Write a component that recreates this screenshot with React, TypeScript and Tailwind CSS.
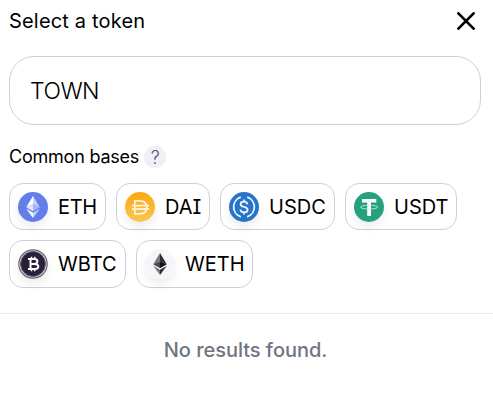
import type { ReactNode } from 'react';

function Eth({ dark = false }: { dark?: boolean }) {
  const c = dark
    ? ['#303030', '#777777', '#151515', '#484848', '#777777', '#303030']
    : ['#ffffff', '#c9d3fa', '#a9b7f6', '#dce3fc', '#ffffff', '#c4cffa'];
  return (
    <svg viewBox="0 0 30 30" className="size-full">
      <circle cx="15" cy="15" r="15" fill={dark ? '#f5f6fa' : '#627eea'} />
      <path d="M15 4 8.2 15.2 15 12.2Z" fill={dark ? c[1] : c[0]} />
      <path d="M15 4v8.2l6.8 3Z" fill={dark ? c[0] : c[1]} />
      <path d="M8.2 15.2 15 19.2v-7Z" fill={c[3]} />
      <path d="m21.8 15.2-6.8 4v-7Z" fill={c[2]} />
      <path d="M8.2 16.8 15 26v-5.3Z" fill={c[4]} />
      <path d="M21.8 16.8 15 26v-5.3Z" fill={c[5]} />
    </svg>
  );
}

function Dai() {
  return (
    <svg viewBox="0 0 30 30" className="size-full" fill="none">
      <defs>
        <linearGradient id="dai" x1="0" y1="0" x2="0" y2="1">
          <stop stopColor="#f9a80f" />
          <stop offset="1" stopColor="#fbc557" />
        </linearGradient>
      </defs>
      <circle cx="15" cy="15" r="15" fill="url(#dai)" />
      <path d="M9.8 8.8h4.7c4.5 0 7.3 2.5 7.3 6.5s-2.8 6.5-7.3 6.5H9.8ZM7 13.6h17M7 17h17" stroke="#fff4d8" strokeWidth="1.8" />
    </svg>
  );
}

function Usdc() {
  return (
    <svg viewBox="0 0 30 30" className="size-full" fill="none">
      <circle cx="15" cy="15" r="15" fill="#2775ca" />
      <g stroke="#eef6ff" strokeWidth="1.8">
        <path d="M11.8 5.2a10.3 10.3 0 0 0 0 19.6M18.2 5.2a10.3 10.3 0 0 1 0 19.6" />
        <path d="M18.4 12.4c-.2-1.8-1.4-2.7-3.4-2.7-2.1 0-3.4.9-3.4 2.5 0 3.8 7 1.7 7 5.5 0 1.7-1.4 2.6-3.6 2.6s-3.5-1-3.7-2.8M15 7.5v2.3M15 20.2v2.3" />
      </g>
    </svg>
  );
}

function Usdt() {
  return (
    <svg viewBox="0 0 30 30" className="size-full" fill="none">
      <circle cx="15" cy="15" r="15" fill="#26a17b" />
      <path d="M8 7h14.3v3.6h-5.3V24h-3.8V10.6H8Z" fill="#fff" />
      <ellipse cx="15.1" cy="15.2" rx="8.6" ry="1.9" stroke="#bfe8dc" strokeWidth=".9" />
    </svg>
  );
}

function Wbtc() {
  return (
    <svg viewBox="0 0 30 30" className="size-full" fill="none">
      <circle cx="15" cy="15" r="14.2" fill="#e4e1ea" stroke="#676172" strokeWidth="1.2" />
      <circle cx="15" cy="15" r="12.4" fill="#282138" stroke="#5b536a" strokeWidth="1" />
      <g stroke="#fff" strokeWidth="2">
        <path d="M10 10h6.1c4.4 0 4.4 4.9 0 4.9h-3.6m-2.5 5.2h6.7c4.8 0 4.8-5.2 0-5.2M12.5 10v10" />
        <path d="M13.5 7.7V10m3.2-2.3V10m-3.2 10v2.3m3.2-2.3v2.3" strokeWidth="1.5" />
      </g>
    </svg>
  );
}

function Token({ name, icon, size }: { name: string; icon: ReactNode; size: string }) {
  return (
    <button className={`flex items-center rounded-[14px] border border-[#d0cfdc] pl-2 ${size}`}>
      <span className="mr-2.5 size-[30px] shrink-0 rounded-full shadow-[0_6px_10px_rgba(0,0,0,0.07)]">{icon}</span>
      <span className="text-[20px] leading-6">{name}</span>
    </button>
  );
}

export default function App() {
  return (
    <main className="h-[407px] w-[493px] overflow-hidden bg-white font-['Inter',sans-serif] text-black">
      <header className="flex h-14 items-start justify-between pl-[9px] pr-[18px]">
        <h1 className="mt-[9px] text-[20px] leading-6 tracking-[0.18px]">Select a token</h1>
        <button aria-label="Close" className="mt-3">
          <svg viewBox="0 0 18 18" className="size-[18px]" fill="none" stroke="currentColor" strokeWidth="2.7" strokeLinecap="round">
            <path d="m1.4 1.4 15.2 15.2M16.6 1.4 1.4 16.6" />
          </svg>
        </button>
      </header>
      <input
        aria-label="Search token"
        defaultValue="TOWN"
        className="ml-[9px] block h-[69px] w-[472px] rounded-[25px] border border-[#d0cfdc] px-[20px] text-[23px] font-[350] tracking-[-0.5px] outline-none"
      />
      <section className="px-[9px] pt-5">
        <div className="flex h-6 items-center">
          <h2 className="text-[18px] leading-6 tracking-[-0.22px]">Common bases</h2>
          <span className="ml-[5px] flex size-[22px] items-center justify-center rounded-full bg-[#efeff6] text-[18px] font-light text-[#55556a]">?</span>
        </div>
        <div className="mt-[14px] flex gap-2.5">
          <Token name="ETH" icon={<Eth />} size="h-[47px] w-[97px] tracking-[-0.3px]" />
          <Token name="DAI" icon={<Dai />} size="h-[47px] w-[94px] [font-feature-settings:'cv08']" />
          <Token name="USDC" icon={<Usdc />} size="h-[47px] w-[115px]" />
          <Token name="USDT" icon={<Usdt />} size="h-[47px] w-[112px]" />
        </div>
        <div className="mt-2.5 flex gap-2.5">
          <Token name="WBTC" icon={<Wbtc />} size="h-12 w-[117px]" />
          <Token name="WETH" icon={<Eth dark />} size="h-12 w-[117px]" />
        </div>
      </section>
      <div className="mt-[25px] border-t border-[#ececef] pt-6 pr-[2px] text-center text-[20px] font-[450] leading-6 tracking-[-0.03px] text-[#717482]">No results found.</div>
    </main>
  );
}
